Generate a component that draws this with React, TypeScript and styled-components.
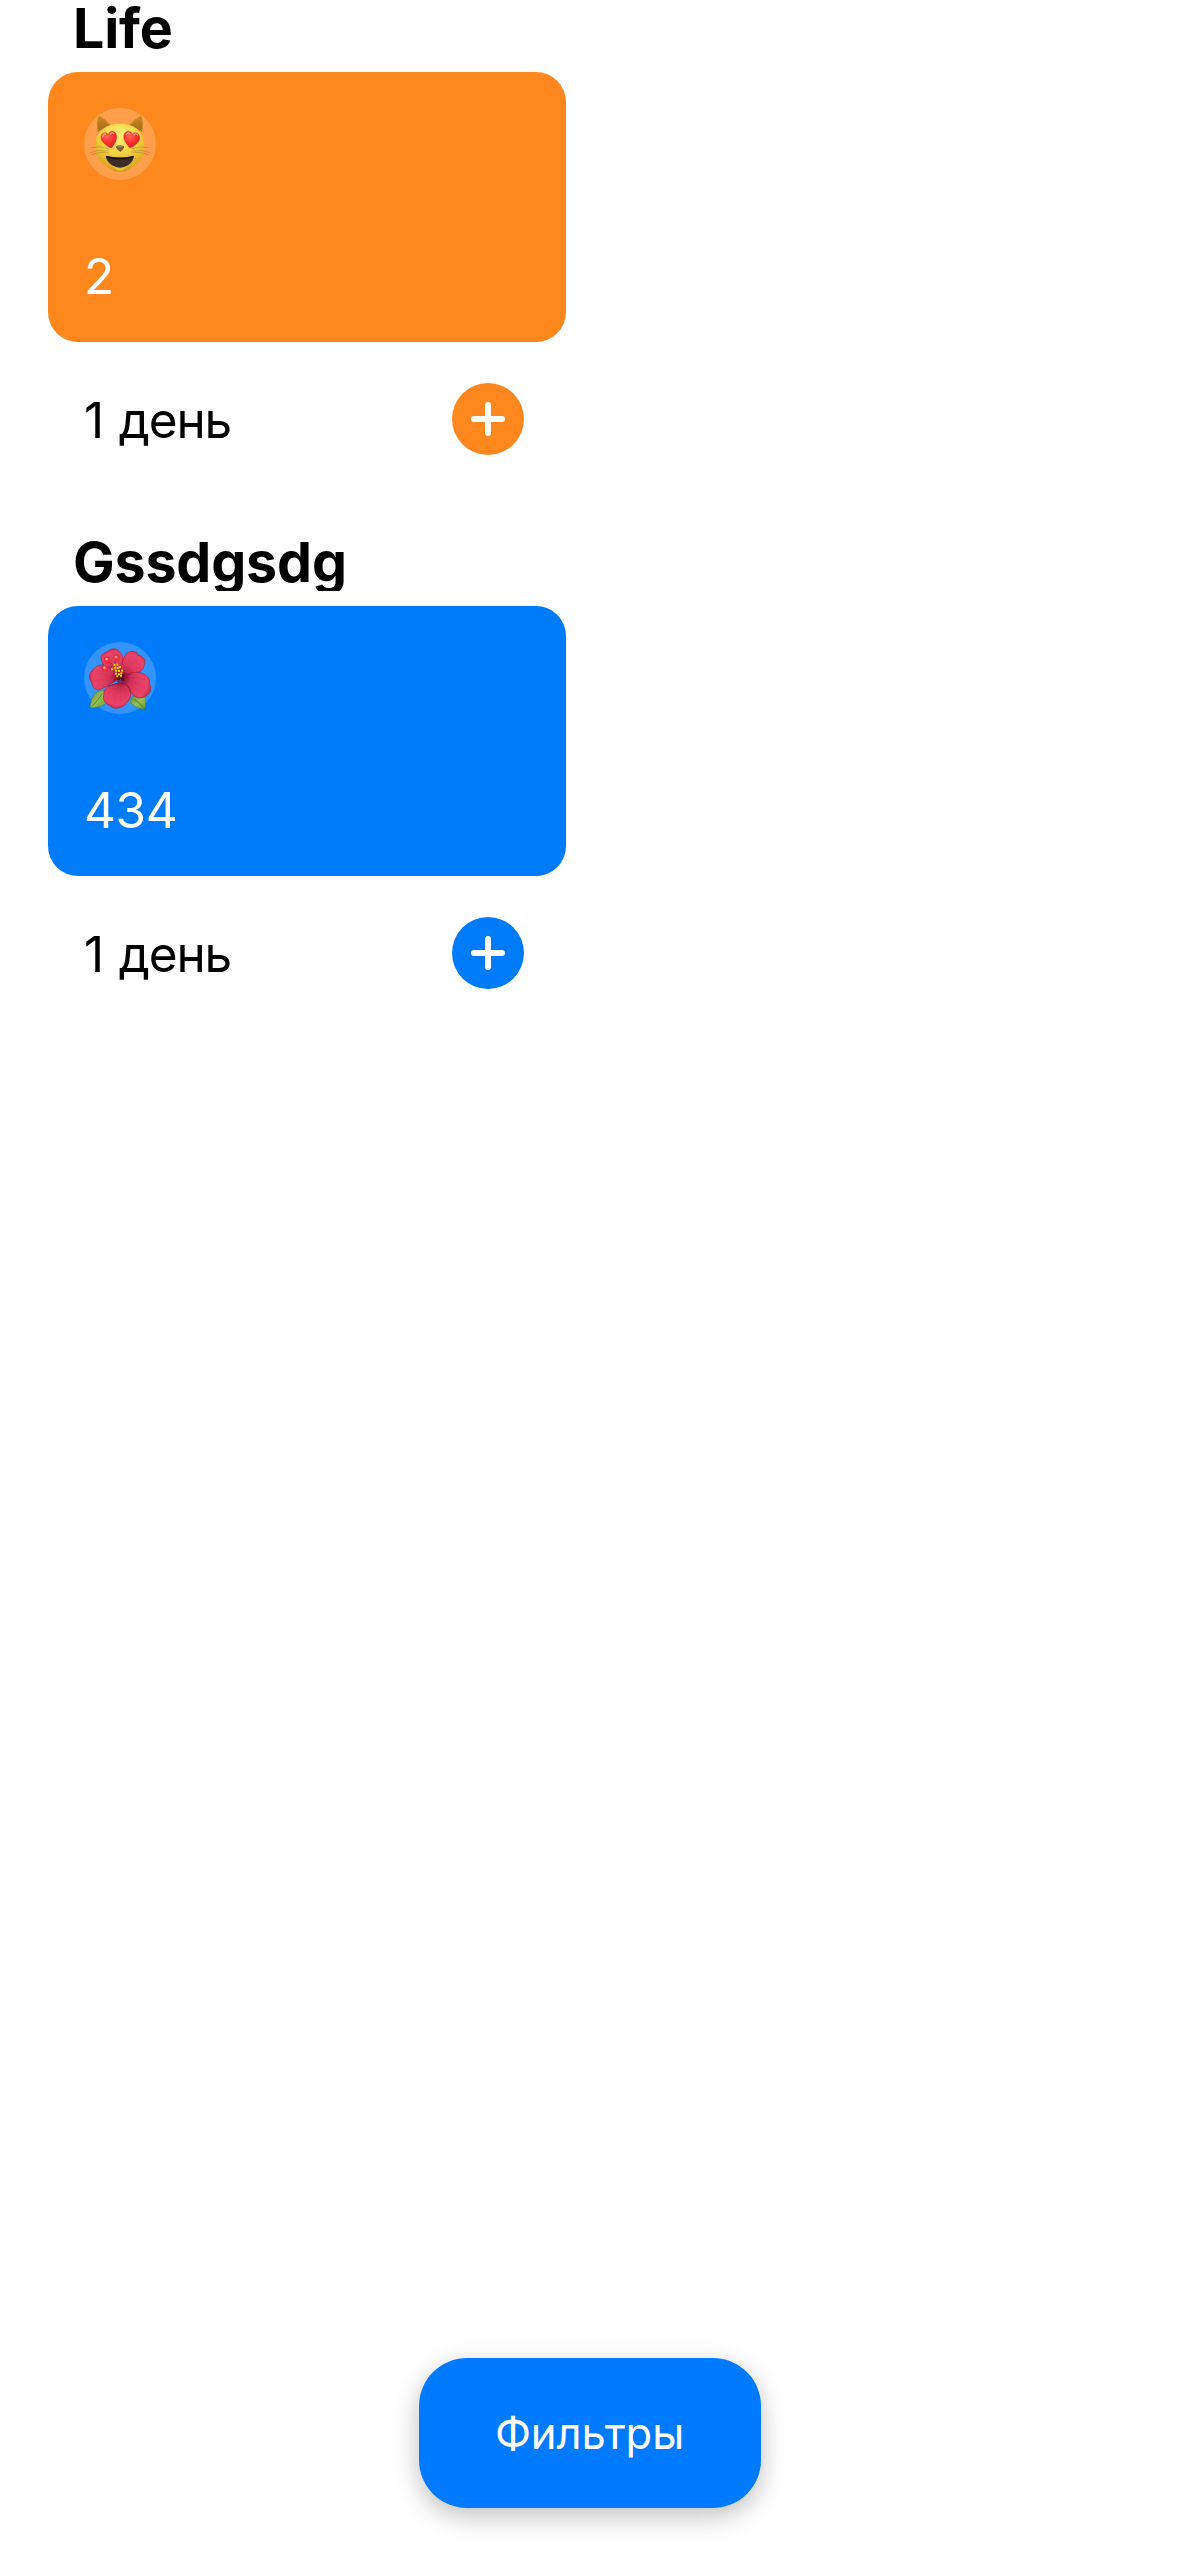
import React from "react";
import styled, { createGlobalStyle } from "styled-components";

const GlobalStyle = createGlobalStyle`
  * { box-sizing: border-box; }
  html, body { margin: 0; padding: 0; background: #fff; }
  body { font-family: Inter, "Liberation Sans", sans-serif; color: #000; }
`;

const Screen = styled.div`
  width: 1179px;
  height: 2556px;
  display: flex;
  flex-direction: column;
  align-items: center;
  justify-content: space-between;
  padding-bottom: 48px;
  overflow: hidden;
  background: #fff;
`;

const TrackerList = styled.main`
  align-self: stretch;
  display: grid;
  grid-template-columns: 518px;
  padding-left: 48px;
`;

const Section = styled.section`
  height: 534px;
  display: flex;
  flex-direction: column;
`;

const SectionTitle = styled.h2`
  margin: 0 0 15px;
  padding-left: 25px;
  height: 57px;
  line-height: 56px;
  font-size: 55.5px;
  font-weight: 700;
  letter-spacing: -0.15px;
  white-space: nowrap;
  overflow: hidden;
`;

const Card = styled.div<{ $color: string }>`
  height: 270px;
  flex: none;
  padding: 36px;
  display: flex;
  flex-direction: column;
  justify-content: space-between;
  border-radius: 30px;
  background: ${(p) => p.$color};
`;

const EmojiBadge = styled.div`
  width: 72px;
  height: 72px;
  border-radius: 50%;
  background: rgba(255, 255, 255, 0.2);

  svg {
    display: block;
    width: 72px;
    height: 72px;
  }
`;

const TrackerName = styled.div`
  line-height: 60px;
  font-size: 49.5px;
  letter-spacing: -0.4px;
  color: #fff;
  white-space: nowrap;
`;

const Footer = styled.div`
  display: flex;
  align-items: center;
  justify-content: space-between;
  padding: 41px 42px 0 36px;
`;

const DayCount = styled.span`
  padding-top: 2px;
  line-height: 60px;
  font-size: 49.5px;
  letter-spacing: -1.2px;
  word-spacing: 3.2px;
  white-space: nowrap;
`;

const AddButton = styled.button<{ $color: string }>`
  width: 72px;
  height: 72px;
  padding: 0;
  border: 0;
  border-radius: 50%;
  background: ${(p) => p.$color};

  svg {
    display: block;
  }
`;

const FiltersButton = styled.button`
  width: 342px;
  height: 150px;
  padding: 0 0 1px;
  border: 0;
  border-radius: 48px;
  background: #007aff;
  box-shadow: 0 8px 26px rgba(0, 0, 0, 0.25);
  color: #fff;
  font-family: inherit;
  font-size: 43.5px;
  line-height: 54px;
  letter-spacing: -0.1px;
`;

const CatEmoji = () => (
  <svg viewBox="42 39 216 216">
    <defs>
      <radialGradient id="catFace" cx="0.5" cy="0.25" r="0.8">
        <stop offset="0" stopColor="#fff176" />
        <stop offset="0.5" stopColor="#f2d03f" />
        <stop offset="0.85" stopColor="#dba822" />
        <stop offset="1" stopColor="#c08c18" />
      </radialGradient>
      <linearGradient id="catEar" x1="0" y1="0" x2="0" y2="1">
        <stop offset="0" stopColor="#c8891f" />
        <stop offset="1" stopColor="#a86a1c" />
      </linearGradient>
      <radialGradient id="catHeart" cx="0.4" cy="0.3" r="0.75">
        <stop offset="0" stopColor="#ff6a5a" />
        <stop offset="0.5" stopColor="#fa3530" />
        <stop offset="1" stopColor="#d81a22" />
      </radialGradient>
    </defs>
    <path d="M84 110 Q81 84 86 66 Q88 63 92 66 Q108 76 121 90Z" fill="url(#catEar)" stroke="#c08a1c" strokeWidth="3" />
    <path d="M216 110 Q219 84 214 66 Q212 63 208 66 Q192 76 179 90Z" fill="url(#catEar)" stroke="#c08a1c" strokeWidth="3" />
    <path
      d="M150 86 C190 86 219 108 222 139 C224 163 224 186 204 203 C189 215 169 231 150 231 C131 231 111 215 96 203 C76 186 76 163 78 139 C81 108 110 86 150 86Z"
      fill="url(#catFace)"
    />
    <path d="M122 204 Q150 234 178 204 Q166 227 150 227 Q134 227 122 204Z" fill="#ead23e" opacity="0.7" />
    <path
      d="M124 159 C111 153 92 142 93 126 C94 113 107 109 115 118 C119 106 132 107 138 116 C145 130 133 149 124 159Z"
      fill="url(#catHeart)"
      stroke="#e12a25"
      strokeWidth="1.5"
    />
    <path d="M98 126 Q99 117 106 117 M121 117 Q126 111 132 116" fill="none" stroke="#ffc0b0" strokeWidth="4" strokeLinecap="round" opacity="0.75" />
    <path
      d="M180 159 C193 153 210 142 209 126 C207 113 194 109 187 118 C183 106 169 107 163 116 C156 130 171 149 180 159Z"
      fill="url(#catHeart)"
      stroke="#e12a25"
      strokeWidth="1.5"
    />
    <path d="M169 119 Q173 111 179 116 M192 119 Q198 114 203 120" fill="none" stroke="#ffc0b0" strokeWidth="4" strokeLinecap="round" opacity="0.75" />
    <path d="M138 154 Q150 148 162 154 Q164 158 158 164 L151 171 L143 164 Q136 158 138 154Z" fill="#83603a" />
    <path d="M142 156 Q150 152 157 156" fill="none" stroke="#b29369" strokeWidth="3" />
    <g fill="none" stroke="#7a5d22" strokeWidth="1.4" opacity="0.65">
      <path d="M117 162 Q90 152 65 158 M115 168 Q85 162 60 173 M117 172 Q88 169 64 179" />
      <path d="M183 162 Q210 152 235 158 M185 168 Q215 162 241 173 M183 172 Q212 169 236 179" />
    </g>
    <path d="M107 182 Q151 192 192 182 Q190 200 174 211 Q150 225 126 211 Q110 200 107 182Z" fill="#3d2d29" />
    <path d="M108 183 Q151 196 191 183 L189 188 Q151 197 110 188Z" fill="#17100d" />
  </svg>
);

const HibiscusEmoji = () => (
  <svg viewBox="42 36 216 216">
    <defs>
      <radialGradient id="petal" gradientUnits="userSpaceOnUse" cx="152" cy="144" r="98">
        <stop offset="0" stopColor="#64001c" />
        <stop offset="0.13" stopColor="#8e1232" />
        <stop offset="0.3" stopColor="#cc2d52" />
        <stop offset="0.5" stopColor="#df3a5f" />
        <stop offset="0.82" stopColor="#e94468" />
        <stop offset="1" stopColor="#cd2a4e" />
      </radialGradient>
      <linearGradient id="leaf" x1="0" y1="0" x2="1" y2="1">
        <stop offset="0" stopColor="#5c8f30" />
        <stop offset="0.5" stopColor="#98bd55" />
        <stop offset="1" stopColor="#669a38" />
      </linearGradient>
    </defs>
    <g fill="url(#leaf)" stroke="#4d7c27" strokeWidth="1.5">
      <path d="M61 234 C62 205 72 185 96 181 L110 186 L108 220 C94 231 78 232 61 234Z" />
      <path d="M225 238 C206 236 190 229 180 215 L190 198 L224 202 C229 214 227 226 225 238Z" />
    </g>
    <path d="M62 233 Q80 216 98 190 M224 237 Q209 218 193 208" fill="none" stroke="#315e19" strokeWidth="1.8" />
    <g fill="url(#petal)" stroke="#a9183b" strokeWidth="1.8">
      <path d="M149 144 C119 125 92 108 93 80 C99 66 109 70 117 61 C128 53 143 56 151 68 C165 82 160 104 149 144Z" />
      <path d="M151 140 C153 112 158 82 171 69 C188 60 202 65 205 76 C220 78 229 91 223 104 C222 122 202 130 184 132 C171 134 161 141 151 140Z" />
      <path d="M150 145 C170 124 200 124 220 131 C235 139 241 148 238 160 C247 177 240 193 226 199 C209 209 192 201 181 186 C176 172 166 157 150 145Z" />
      <path d="M150 147 C126 157 108 174 83 180 C67 174 67 165 65 158 C54 144 59 126 69 119 C81 104 99 100 112 112 C128 120 138 133 150 147Z" />
      <path d="M151 157 C172 158 185 174 182 192 C182 209 171 216 164 225 C149 237 130 237 121 228 C105 222 97 208 102 192 C100 178 112 169 126 165 C136 162 143 160 151 157Z" />
    </g>
    <g fill="none" stroke="#b01a40" strokeWidth="1.1" opacity="0.3">
      <path d="M158 130 Q168 93 190 76 M163 130 Q181 101 210 86 M166 129 Q190 116 215 111" />
      <path d="M171 145 Q202 138 231 153 M176 153 Q205 159 235 180 M181 164 Q203 178 223 192" />
      <path d="M132 147 Q98 126 70 131 M126 152 Q97 147 67 151 M121 158 Q95 169 78 170" />
      <path d="M138 169 Q112 188 111 213 M146 169 Q132 194 133 225 M153 168 Q151 201 151 225 M160 169 Q169 192 167 211" />
    </g>
    <path
      d="M152 156 Q135 162 114 169 M155 157 Q175 162 181 187 M155 138 Q167 134 184 132"
      fill="none"
      stroke="#6d0d2a"
      strokeWidth="3"
      opacity="0.55"
    />
    <path d="M137 140 Q150 128 165 134 Q158 145 162 158 Q150 152 141 158 Q145 147 137 140Z" fill="#4c0017" opacity="0.6" />
    <path d="M150 134 L132 107 L111 90 M132 107 L139 84 M132 107 L104 116" fill="none" stroke="#9f1734" strokeWidth="2.5" />
    <g fill="#ffe000">
      <rect x="130" y="101" width="6" height="6" />
      <rect x="139" y="101" width="6" height="6" />
      <rect x="123" y="115" width="6" height="6" />
      <rect x="132" y="110" width="6" height="6" />
      <rect x="140" y="111" width="6" height="6" />
      <rect x="147" y="108" width="6" height="6" />
      <rect x="135" y="119" width="6" height="6" />
      <rect x="144" y="120" width="6" height="6" />
      <rect x="153" y="119" width="6" height="6" />
      <rect x="135" y="128" width="6" height="6" />
      <rect x="144" y="130" width="6" height="6" />
      <rect x="151" y="127" width="6" height="6" />
      <rect x="139" y="136" width="6" height="6" />
      <rect x="150" y="134" width="6" height="6" />
    </g>
    <g fill="#ef343c" stroke="#b81b2c" strokeWidth="1">
      <circle cx="111" cy="89" r="9" />
      <circle cx="139" cy="83" r="9" />
      <circle cx="104" cy="115" r="9" />
    </g>
    <g fill="#ff9a91">
      <circle cx="110" cy="87" r="4" />
      <circle cx="138" cy="81" r="4" />
      <circle cx="103" cy="113" r="4" />
    </g>
  </svg>
);

const PlusIcon = () => (
  <svg width="72" height="72" viewBox="0 0 72 72">
    <path d="M36 22v28M22 36h28" stroke="#fff" strokeWidth="6" strokeLinecap="round" />
  </svg>
);

const trackers = [
  { category: "Life", name: "2", days: "1 день", color: "#ff881e", Emoji: CatEmoji },
  { category: "Gssdgsdg", name: "434", days: "1 день", color: "#007bfa", Emoji: HibiscusEmoji },
];

export default function App() {
  return (
    <>
      <GlobalStyle />
      <Screen>
        <TrackerList>
          {trackers.map(({ category, name, days, color, Emoji }) => (
            <Section key={category}>
              <SectionTitle>{category}</SectionTitle>
              <Card $color={color}>
                <EmojiBadge>
                  <Emoji />
                </EmojiBadge>
                <TrackerName>{name}</TrackerName>
              </Card>
              <Footer>
                <DayCount>{days}</DayCount>
                <AddButton $color={color} aria-label="+">
                  <PlusIcon />
                </AddButton>
              </Footer>
            </Section>
          ))}
        </TrackerList>
        <FiltersButton>Фильтры</FiltersButton>
      </Screen>
    </>
  );
}
